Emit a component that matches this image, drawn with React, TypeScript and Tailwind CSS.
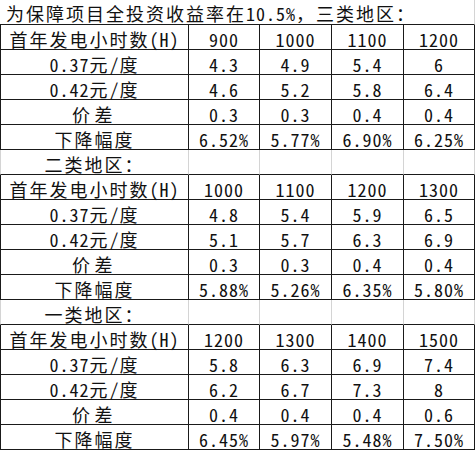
import React from 'react';

type Section = {
  title?: string;
  hours: string[];
  p037: string[];
  p042: string[];
  diff: string[];
  drop: string[];
};

const sections: Section[] = [
  {
    hours: ['900', '1000', '1100', '1200'],
    p037: ['4.3', '4.9', '5.4', '6'],
    p042: ['4.6', '5.2', '5.8', '6.4'],
    diff: ['0.3', '0.3', '0.4', '0.4'],
    drop: ['6.52%', '5.77%', '6.90%', '6.25%'],
  },
  {
    title: '二类地区：',
    hours: ['1000', '1100', '1200', '1300'],
    p037: ['4.8', '5.4', '5.9', '6.5'],
    p042: ['5.1', '5.7', '6.3', '6.9'],
    diff: ['0.3', '0.3', '0.4', '0.4'],
    drop: ['5.88%', '5.26%', '6.35%', '5.80%'],
  },
  {
    title: '一类地区：',
    hours: ['1200', '1300', '1400', '1500'],
    p037: ['5.8', '6.3', '6.9', '7.4'],
    p042: ['6.2', '6.7', '7.3', '8'],
    diff: ['0.4', '0.4', '0.4', '0.6'],
    drop: ['6.45%', '5.97%', '5.48%', '7.50%'],
  },
];

const font = {
  fontFamily: "'Noto Sans Mono CJK SC', 'Noto Sans CJK SC', 'DejaVu Sans Mono', monospace",
};

// split text into CJK / ascii runs so each gets its own spacing (cells are 20px / 10px like the sheet)
function Txt({ text, wide }: { text: string; wide?: boolean }) {
  const runs: { cjk: boolean; s: string }[] = [];
  for (const ch of text) {
    const cjk = ch.charCodeAt(0) > 0x2e80;
    const last = runs[runs.length - 1];
    if (last && last.cjk === cjk) last.s += ch;
    else runs.push({ cjk, s: ch });
  }
  return (
    <span className="whitespace-nowrap">
      {runs.map((r, i) => (
        <span
          key={i}
          className={r.cjk ? (wide ? 'tracking-[4.5px]' : 'tracking-[2px]') : 'tracking-[1px]'}
        >
          {r.s}
        </span>
      ))}
    </span>
  );
}

function Cell({ children, first }: { children?: React.ReactNode; first?: boolean }) {
  return (
    <div
      className={`flex h-[25px] items-center justify-center border-r border-b border-[#1a1a1a] pt-[3px] text-[18px] leading-[18px] ${
        first ? 'border-l' : ''
      }`}
    >
      {children}
    </div>
  );
}

function DataRow({ label, values, wide }: { label: string; values: string[]; wide?: boolean }) {
  return (
    <>
      <Cell first>
        <Txt text={label} wide={wide} />
      </Cell>
      {values.map((v, i) => (
        <Cell key={i}>
          <Txt text={v} />
        </Cell>
      ))}
    </>
  );
}

export default function App() {
  return (
    <div className="h-[451px] w-[476px] bg-white font-light text-[#111]" style={font}>
      <div className="grid grid-cols-[189px_71px_72px_72px_71px]">
        {/* top caption */}
        <div className="col-span-5 flex h-[25px] items-center border-r border-b border-r-[#d4d4d4] border-b-[#1a1a1a] pt-[2px] pl-[6px] text-[18px] leading-[18px]">
          <Txt text="为保障项目全投资收益率在10.5%，三类地区：" />
        </div>

        {sections.map((s, idx) => (
          <React.Fragment key={idx}>
            {s.title && (
              <>
                <div className="flex h-[25px] items-center justify-center border-r border-b border-l border-r-[#d4d4d4] border-l-[#d4d4d4] border-b-[#1a1a1a] pt-[3px] text-[18px] leading-[18px]">
                  <Txt text={s.title} />
                </div>
                {[0, 1, 2, 3].map((i) => (
                  <div key={i} className="h-[25px] border-r border-b border-r-[#d4d4d4] border-b-[#1a1a1a]" />
                ))}
              </>
            )}
            <DataRow label="首年发电小时数(H)" values={s.hours} />
            <DataRow label="0.37元/度" values={s.p037} />
            <DataRow label="0.42元/度" values={s.p042} />
            <DataRow label="价差" values={s.diff} wide />
            <DataRow label="下降幅度" values={s.drop} />
          </React.Fragment>
        ))}
      </div>
    </div>
  );
}
